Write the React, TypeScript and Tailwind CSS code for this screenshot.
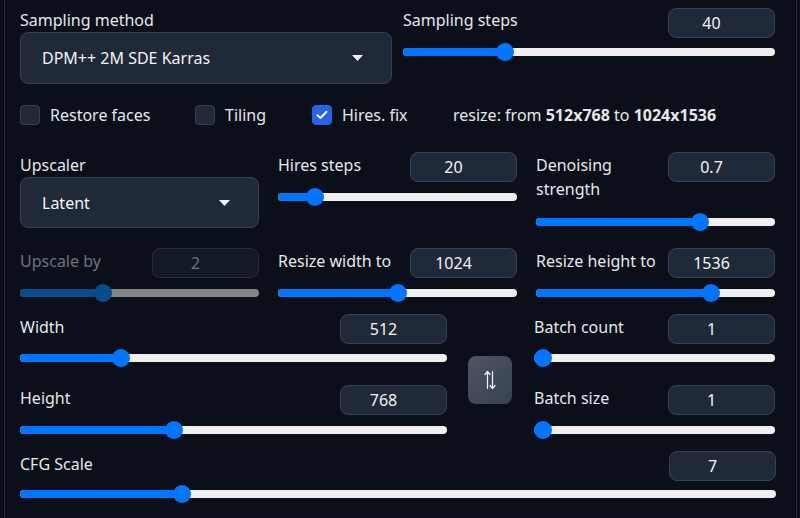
import React from "react";

const font = { fontFamily: '"Noto Sans", "Open Sans", sans-serif' };

function Slider({ frac, disabled = false }: { frac: number; disabled?: boolean }) {
  const pct = `calc(9px + (100% - 18px) * ${frac})`;
  return (
    <div className="relative h-[20px] w-full">
      <div
        className={`absolute left-0 right-0 top-[6px] h-[8px] rounded-full ${disabled ? "bg-[#858585]" : "bg-[#efefef]"}`}
      />
      <div
        className={`absolute left-0 top-[6px] h-[8px] rounded-l-full ${disabled ? "bg-[#0c4a8e]" : "bg-[#0075ff]"}`}
        style={{ width: pct }}
      />
      <div
        className={`absolute top-[1px] h-[18px] w-[18px] -translate-x-1/2 rounded-full ${disabled ? "bg-[#0c4a8e]" : "bg-[#0075ff]"}`}
        style={{ left: pct }}
      />
    </div>
  );
}

function NumBox({ value, disabled = false }: { value: string; disabled?: boolean }) {
  return (
    <div
      className={`flex h-[30px] w-[107px] shrink-0 items-center justify-center rounded-[8px] border pr-[20px] text-[16px] ${
        disabled
          ? "border-[#252b37] bg-[#131a26] text-[#6b7280]"
          : "border-[#374151] bg-[#1f2937] text-[#f3f4f6]"
      }`}
    >
      {value}
    </div>
  );
}

function SliderBlock({
  label,
  value,
  frac,
  disabled = false,
  gap = "mt-[5px]",
}: {
  label: string;
  value: string;
  frac: number;
  disabled?: boolean;
  gap?: string;
}) {
  return (
    <div className="flex flex-col">
      <div className="flex h-[30px] items-start justify-between">
        <span className={`pt-[1px] text-[16px] leading-6 ${disabled ? "text-[#6b7280]" : "text-[#e5e7eb]"}`}>
          {label}
        </span>
        <NumBox value={value} disabled={disabled} />
      </div>
      <div className={gap}>
        <Slider frac={frac} disabled={disabled} />
      </div>
    </div>
  );
}

function Dropdown({ text, h }: { text: string; h: string }) {
  return (
    <div
      className={`flex ${h} items-center justify-between rounded-[8px] border border-[#374151] bg-[#1f2937] pl-[21px] pr-[28px] text-[16px] text-[#f3f4f6]`}
    >
      <span>{text}</span>
      <svg width="11" height="6" viewBox="0 0 11 6">
        <path d="M0 0 L11 0 L5.5 6 Z" fill="#f3f4f6" />
      </svg>
    </div>
  );
}

function Check({ label, checked = false }: { label: string; checked?: boolean }) {
  return (
    <div className="flex items-center gap-[10px]">
      <div
        className={`flex h-[20px] w-[20px] items-center justify-center rounded-[4px] border ${
          checked ? "border-[#2563eb] bg-[#2563eb]" : "border-[#374151] bg-[#1f2937]"
        }`}
      >
        {checked && (
          <svg width="12" height="10" viewBox="0 0 12 10">
            <path d="M1.5 5.2 L4.5 8 L10.5 1.8" fill="none" stroke="white" strokeWidth="2" strokeLinecap="round" strokeLinejoin="round" />
          </svg>
        )}
      </div>
      <span className="text-[16px] text-[#e5e7eb]">{label}</span>
    </div>
  );
}

export default function App() {
  return (
    <div className="h-[518px] w-[800px] overflow-hidden bg-[#0b0f19]" style={font}>
      <div className="ml-[4px] h-full w-[793px] border-l border-r border-[#1f2937] pl-[15px] pr-[20px]">
        {/* Row 1 */}
        <div className="flex gap-[11px] pt-[8px]">
          <div className="flex w-[372px] flex-col">
            <span className="h-[24px] text-[16px] leading-6 text-[#e5e7eb]">Sampling method</span>
            <Dropdown text="DPM++ 2M SDE Karras" h="h-[52px]" />
          </div>
          <div className="flex w-[372px] flex-col">
            <div className="flex h-[30px] items-start justify-between">
              <span className="text-[16px] leading-6 text-[#e5e7eb]">Sampling steps</span>
              <NumBox value="40" />
            </div>
            <div className="mt-[4px]">
              <Slider frac={39 / 149} />
            </div>
          </div>
        </div>

        {/* Checkbox row */}
        <div className="mt-[21px] flex h-[20px] items-center">
          <div className="w-[175px]">
            <Check label="Restore faces" />
          </div>
          <div className="w-[117px]">
            <Check label="Tiling" />
          </div>
          <div className="w-[141px]">
            <Check label="Hires. fix" checked />
          </div>
          <span className="text-[16px] text-[#e5e7eb]">
            resize: from <b className="font-bold">512x768</b> to <b className="font-bold">1024x1536</b>
          </span>
        </div>

        {/* Row 3 */}
        <div className="mt-[27px] grid grid-cols-[239px_239px_239px] gap-x-[19px]">
          <div className="flex flex-col">
            <span className="h-[25px] pt-[1px] text-[16px] leading-6 text-[#e5e7eb]">Upscaler</span>
            <Dropdown text="Latent" h="h-[51px]" />
          </div>
          <SliderBlock label="Hires steps" value="20" frac={19 / 149} />
          <div className="flex flex-col">
            <div className="flex h-[49px] items-start justify-between">
              <span className="pt-[1px] text-[16px] leading-6 text-[#e5e7eb]">
                Denoising
                <br />
                strength
              </span>
              <NumBox value="0.7" />
            </div>
            <div className="mt-[11px]">
              <Slider frac={0.7} />
            </div>
          </div>
        </div>

        {/* Row 4 */}
        <div className="mt-[16px] grid grid-cols-[239px_239px_239px] gap-x-[19px]">
          <SliderBlock label="Upscale by" value="2" frac={1 / 3} disabled />
          <SliderBlock label="Resize width to" value="1024" frac={0.5} />
          <SliderBlock label="Resize height to" value="1536" frac={0.75} />
        </div>

        {/* Row 5 */}
        <div className="mt-[11px] flex">
          <div className="flex w-[427px] flex-col">
            <SliderBlock label="Width" value="512" frac={448 / 1984} gap="mt-[4px]" />
            <div className="mt-[17px]">
              <SliderBlock label="Height" value="768" frac={704 / 1984} />
            </div>
          </div>
          <div className="ml-[21px] flex w-[44px] flex-col pt-[42px]">
            <div className="flex h-[48px] w-[44px] items-center justify-center rounded-[8px] bg-gradient-to-br from-[#4b5563] to-[#374151]">
              <svg width="14" height="20" viewBox="0 0 14 20">
                <path d="M4.5 18.5 V2 M2 4.5 L4.5 1.5 L7 4.5" fill="none" stroke="#f3f4f6" strokeWidth="1.2" strokeLinecap="round" strokeLinejoin="round" />
                <path d="M9.5 1.5 V18 M7 15.5 L9.5 18.5 L12 15.5" fill="none" stroke="#f3f4f6" strokeWidth="1.2" strokeLinecap="round" strokeLinejoin="round" />
              </svg>
            </div>
          </div>
          <div className="ml-[22px] flex w-[241px] flex-col">
            <SliderBlock label="Batch count" value="1" frac={0} gap="mt-[4px]" />
            <div className="mt-[17px]">
              <SliderBlock label="Batch size" value="1" frac={0} />
            </div>
          </div>
        </div>

        {/* CFG */}
        <div className="mt-[11px]">
          <SliderBlock label="CFG Scale" value="7" frac={6 / 29} gap="mt-[3px]" />
        </div>
      </div>
    </div>
  );
}
